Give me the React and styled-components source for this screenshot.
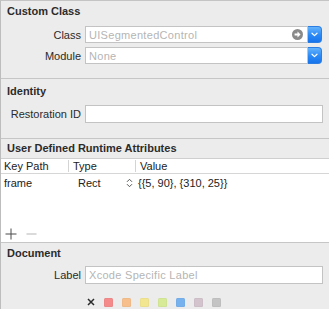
import React from "react";
import styled, { createGlobalStyle } from "styled-components";

const Global = createGlobalStyle`
  html, body { margin: 0; padding: 0; background: #ececec; }
  body { font-family: "Liberation Sans", Arial, sans-serif; font-size: 11px; color: #222; }
  * { box-sizing: border-box; }
`;

const Panel = styled.div`
  width: 329px;
  height: 309px;
  overflow: hidden;
  background: #ececec;
  border-left: 1px solid #bdbdbd;
  border-top: 1px solid #c4c4c4;
  display: flex;
  flex-direction: column;
`;

const Section = styled.section`
  height: ${(p) => p.$h}px;
  flex: ${(p) => (p.$h ? "0 0 auto" : "1 1 auto")};
  border-bottom: ${(p) => (p.$last ? "none" : "1px solid #c6c6c6")};
  display: flex;
  flex-direction: column;
`;

const Header = styled.div`
  height: ${(p) => p.$h || 20}px;
  margin-top: ${(p) => p.$mt || 0}px;
  line-height: ${(p) => p.$h || 20}px;
  padding-left: 6px;
  font-weight: bold;
  font-size: 11px;
  color: #2b2b2b;
  flex: 0 0 auto;
`;

const Rows = styled.div`
  display: flex;
  flex-direction: column;
  gap: 4px;
  padding-top: ${(p) => p.$pt || 0}px;
`;

const Row = styled.div`
  display: grid;
  grid-template-columns: 80px 1fr;
  column-gap: 4px;
  align-items: center;
  padding-right: 6px;
  margin-top: ${(p) => p.$mt || 0}px;
`;

const Label = styled.div`
  text-align: right;
  color: #2a2a2a;
  font-size: 11px;
`;

const Field = styled.div`
  height: ${(p) => p.$h || 18}px;
  background: #fff;
  border: 1px solid #c3c3c3;
  display: flex;
  align-items: center;
  padding-left: 3px;
  color: ${(p) => (p.$placeholder ? "#b5b5b5" : "#222")};
  font-size: 11px;
  letter-spacing: ${(p) => (p.$placeholder ? "0.3px" : "0")};
  position: relative;
  flex: 1 1 auto;
  min-width: 0;
`;

const Popup = styled.div`
  display: flex;
  margin-right: 1px;
`;

const BlueButton = styled.div`
  width: 14px;
  height: 17px;
  flex: 0 0 14px;
  border-radius: 0 4px 4px 0;
  background: linear-gradient(#64b4fc, #2a88f5 55%, #1874ec);
  border: 1px solid #2c7ee2;
  border-left: none;
  display: flex;
  align-items: center;
  justify-content: center;
`;

const GoIcon = styled.div`
  position: absolute;
  right: 4px;
  top: 2px;
  width: 11px;
  height: 11px;
  border-radius: 50%;
  background: #8a8a8a;
  display: flex;
  align-items: center;
  justify-content: center;
`;

const Table = styled.div`
  flex: 1 1 auto;
  background: #fff;
  border-top: 1px solid #cfcfcf;
  display: flex;
  flex-direction: column;
`;

const TableRow = styled.div`
  display: grid;
  grid-template-columns: 67px 67px 1fr;
  height: ${(p) => p.$h}px;
  align-items: center;
  border-bottom: ${(p) => (p.$head ? "1px solid #d6d6d6" : "none")};
  flex: 0 0 auto;
`;

const Cell = styled.div`
  padding-left: ${(p) => p.$pl ?? 3}px;
  margin-left: ${(p) => p.$ml || 0}px;
  border-left: ${(p) => (p.$sep ? "1px solid #d4d4d4" : "none")};
  height: ${(p) => (p.$sep ? "12px" : "auto")};
  line-height: 12px;
  font-size: 11px;
  color: #222;
  white-space: nowrap;
  display: flex;
  align-items: center;
  gap: 5px;
`;

const Footer = styled.div`
  margin-top: auto;
  height: 14px;
  display: flex;
  align-items: center;
  gap: 9px;
  padding-left: 4px;
  margin-bottom: 1px;
`;

const ColorRow = styled.div`
  display: flex;
  align-items: center;
  gap: 9px;
  padding-left: 2px;
  height: 12px;
`;

const Swatch = styled.div`
  width: 9px;
  height: 9px;
  border-radius: 1.5px;
  background: ${(p) => p.$c};
  box-shadow: inset 0 0 0 0.5px rgba(0,0,0,0.06);
`;

const Chevron = () => (
  <svg width="7" height="5" viewBox="0 0 7 5">
    <path d="M1 1.2 L3.5 3.6 L6 1.2" fill="none" stroke="#fff" strokeWidth="1.2" strokeLinecap="round" strokeLinejoin="round" />
  </svg>
);

const Arrow = () => (
  <svg width="9" height="9" viewBox="0 0 8 8">
    <path d="M1.4 3.1 H4 V1.4 L6.7 4 L4 6.6 V4.9 H1.4 Z" fill="#fff" />
  </svg>
);

const Stepper = () => (
  <svg width="7" height="10" viewBox="0 0 7 10">
    <path d="M1 3.8 L3.5 1.3 L6 3.8 M1 6.2 L3.5 8.7 L6 6.2" fill="none" stroke="#555" strokeWidth="1" />
  </svg>
);

const Plus = () => (
  <svg width="12" height="12" viewBox="0 0 12 12">
    <path d="M6 0.5 V11.5 M0.5 6 H11.5" stroke="#4a4a4a" strokeWidth="1" />
  </svg>
);

const Minus = () => (
  <svg width="11" height="12" viewBox="0 0 11 12">
    <path d="M0.5 6 H10.5" stroke="#b5b5b5" strokeWidth="1" />
  </svg>
);

const CloseX = () => (
  <svg width="8" height="8" viewBox="0 0 8 8">
    <path d="M1 1 L7 7 M7 1 L1 7" stroke="#2a2a2a" strokeWidth="1.5" />
  </svg>
);

const swatches = ["#f48a8a", "#f6bf8c", "#f3e690", "#d6ea98", "#78b2ee", "#d2c3cd", "#c4c4c4"];

export default function App() {
  return (
    <>
      <Global />
      <Panel>
        <Section $h={78}>
          <Header>Custom Class</Header>
          <Rows $pt={5}>
            <Row>
              <Label>Class</Label>
              <Popup>
                <Field $h={17} $placeholder>
                  UISegmentedControl
                  <GoIcon><Arrow /></GoIcon>
                </Field>
                <BlueButton><Chevron /></BlueButton>
              </Popup>
            </Row>
            <Row>
              <Label>Module</Label>
              <Popup>
                <Field $h={17} $placeholder>None</Field>
                <BlueButton><Chevron /></BlueButton>
              </Popup>
            </Row>
          </Rows>
        </Section>

        <Section $h={60}>
          <Header $mt={2}>Identity</Header>
          <Row $mt={4}>
            <Label>Restoration ID</Label>
            <Field $h={18} />
          </Row>
        </Section>

        <Section $h={104}>
          <Header $h={19}>User Defined Runtime Attributes</Header>
          <Table>
            <TableRow $head $h={15}>
              <Cell>Key Path</Cell>
              <Cell $sep $pl={4}>Type</Cell>
              <Cell $sep $pl={4}>Value</Cell>
            </TableRow>
            <TableRow $h={17}>
              <Cell>frame</Cell>
              <Cell $pl={10}>Rect</Cell>
              <Cell $pl={0} $ml={-9}>
                <Stepper />
                {"{{5, 90}, {310, 25}}"}
              </Cell>
            </TableRow>
            <Footer>
              <Plus />
              <Minus />
            </Footer>
          </Table>
        </Section>

        <Section $last>
          <Header>Document</Header>
          <Row $mt={3}>
            <Label>Label</Label>
            <Field $h={18} $placeholder>Xcode Specific Label</Field>
          </Row>
          <Row $mt={12}>
            <div />
            <ColorRow>
              <CloseX />
              {swatches.map((c) => (
                <Swatch key={c} $c={c} />
              ))}
            </ColorRow>
          </Row>
        </Section>
      </Panel>
    </>
  );
}
